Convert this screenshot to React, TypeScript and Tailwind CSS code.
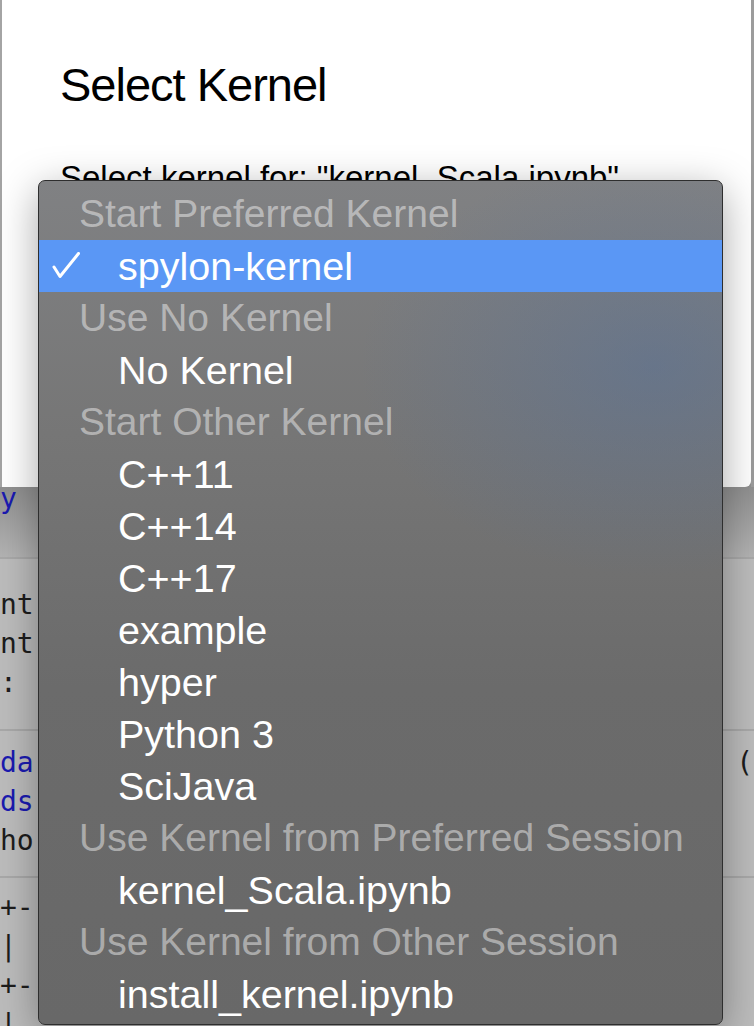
import React from "react";

type Row = { label: string; header?: boolean; selected?: boolean };

const rows: Row[] = [
  { label: "Start Preferred Kernel", header: true },
  { label: "spylon-kernel", selected: true },
  { label: "Use No Kernel", header: true },
  { label: "No Kernel" },
  { label: "Start Other Kernel", header: true },
  { label: "C++11" },
  { label: "C++14" },
  { label: "C++17" },
  { label: "example" },
  { label: "hyper" },
  { label: "Python 3" },
  { label: "SciJava" },
  { label: "Use Kernel from Preferred Session", header: true },
  { label: "kernel_Scala.ipynb" },
  { label: "Use Kernel from Other Session", header: true },
  { label: "install_kernel.ipynb" },
];

function Check() {
  return (
    <svg width="28" height="27" viewBox="0 0 28 27" fill="none">
      <polyline
        points="2,15 8,24.5 26.5,1.5"
        stroke="white"
        strokeWidth="3"
        strokeLinecap="round"
        strokeLinejoin="round"
      />
    </svg>
  );
}

function KernelMenu() {
  return (
    <div className="absolute left-[38px] top-[180px] w-[685px] h-[845px] rounded-[7px] border border-[#2e2e2e] pt-[7px] shadow-[0_10px_40px_rgba(0,0,0,0.35)] bg-[radial-gradient(420px_300px_at_90%_22%,rgba(80,112,160,0.42),transparent_70%),linear-gradient(180deg,#808183_0%,#767676_30%,#6b6b6b_60%,#686868_100%)] font-['Liberation_Sans',Arial,sans-serif]">
      {rows.map((row) =>
        row.header ? (
          <div key={row.label} className="h-[52px] leading-[52px] pl-[40px] text-[39px] text-white/45 whitespace-nowrap">
            {row.label}
          </div>
        ) : (
          <div
            key={row.label}
            className={
              row.selected
                ? "relative h-[52px] leading-[52px] pl-[79px] text-[39.5px] text-white bg-[#5a97f5] whitespace-nowrap"
                : "h-[52px] leading-[52px] pl-[79px] text-[39.5px] text-white whitespace-nowrap"
            }
          >
            {row.selected && (
              <span className="absolute left-[13px] top-[12px] flex">
                <Check />
              </span>
            )}
            {row.label}
          </div>
        )
      )}
    </div>
  );
}

export default function App() {
  return (
    <div className="relative w-[754px] h-[1026px] overflow-hidden bg-[#bcbcbc]">
      {/* dialog */}
      <div className="flex h-[487px]">
        <div className="w-[2px] bg-[#a4a4a4]" />
        <div className="flex-1 bg-white rounded-br-[6px] pl-[58px] pt-[61px] font-['Liberation_Sans',Arial,sans-serif] text-black">
          <h1 className="text-[47px] leading-[47px] tracking-[-1px]">Select Kernel</h1>
          <p className="mt-[53px] text-[33px] leading-[33px] whitespace-nowrap">
            Select kernel for: "kernel_Scala.ipynb"
          </p>
        </div>
        <div className="w-[3px] bg-[#9c9c9c]" />
      </div>

      {/* notebook behind */}
      <div className="font-['DejaVu_Sans_Mono',monospace] text-[28px] text-[#1c1c1c]">
        <div className="h-[80px] border-b-2 border-[#a8a8a8] bg-gradient-to-b from-[#8c8c8c] to-[#b3b3b3]">
          <div className="-mt-[8px] leading-[39px] text-[#1a1ab0]">y</div>
        </div>
        <div className="h-[172px] border-b-2 border-[#a8a8a8] pt-[26px] leading-[39px]">
          <div>nt</div>
          <div>nt</div>
          <div>:</div>
        </div>
        <div className="h-[147px] border-b-2 border-[#a8a8a8] pt-[12px] leading-[39px]">
          <div className="flex">
            <span className="text-[#1a1ab0]">da</span>
            <span className="ml-auto -mr-[16px]">
              (<span className="text-[#2a7a1a]">9</span>
            </span>
          </div>
          <div className="text-[#1a1ab0]">ds</div>
          <div>ho</div>
        </div>
        <div className="pt-[10px] leading-[39px]">
          <div>+--</div>
          <div>| .</div>
          <div>+--</div>
          <div>|</div>
        </div>
      </div>

      <KernelMenu />
    </div>
  );
}
